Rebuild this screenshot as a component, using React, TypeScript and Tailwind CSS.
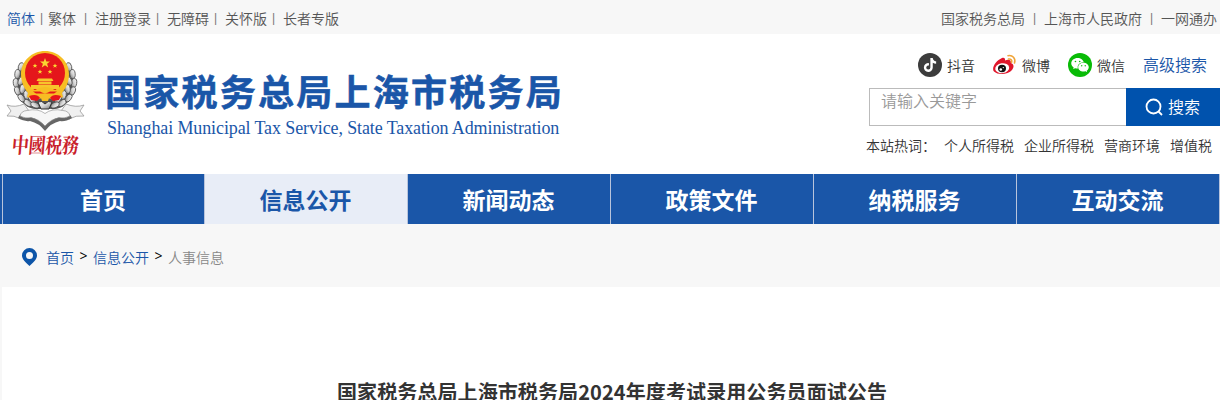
import React from "react";
import { FaTiktok } from "react-icons/fa";
import { AiFillWechat } from "react-icons/ai";

type barType = {
  label: string;
  // width of the gap holding the divider in front of the link
  gap?: string;
};

const leftLinks: barType[] = [
  { label: "简体" },
  { label: "繁体", gap: "w-[13px]" },
  { label: "注册登录", gap: "w-[19px]" },
  { label: "无障碍", gap: "w-[16px] pr-[3px]" },
  { label: "关怀版", gap: "w-[16px] pr-[3px]" },
  { label: "长者专版", gap: "w-[16px] pr-[3px]" },
];

const rightLinks: barType[] = [
  { label: "国家税务总局" },
  { label: "上海市人民政府", gap: "w-[19px]" },
  { label: "一网通办", gap: "w-[19px]" },
];

const menu = ["首页", "信息公开", "新闻动态", "政策文件", "纳税服务", "互动交流"];
const hotWords = ["个人所得税", "企业所得税", "营商环境", "增值税"];

// one side of the wheat ears: x, y, angle
const grains = [
  [17, 19, 15],
  [13.5, 26, 5],
  [12, 35, -8],
  [17, 33, 20],
  [13.5, 43, -20],
  [18.5, 41, 5],
  [17.5, 50, -38],
  [22.5, 47, -12],
  [24, 55, -55],
  [28, 51, -35],
  [31, 57, -70],
];

function LinkBar({ links, active }: { links: barType[]; active?: string }) {
  return (
    <div className="flex items-center text-sm leading-[20px]">
      {links.map((item) => (
        <React.Fragment key={item.label}>
          {item.gap && (
            <span
              className={`${item.gap} text-center font-['Liberation_Sans'] text-[12px] leading-[20px] text-[#777]`}
            >
              |
            </span>
          )}
          <a className={item.label === active ? "text-[#1a56a8]" : ""}>
            {item.label}
          </a>
        </React.Fragment>
      ))}
    </div>
  );
}

function Ear() {
  return (
    <g fill="url(#silver)" stroke="#4a4a4a" strokeWidth="0.8">
      {grains.map(([x, y, angle]) => (
        <ellipse
          key={`${x}-${y}`}
          cx={x}
          cy={y}
          rx="2.7"
          ry="4.5"
          transform={`rotate(${angle} ${x} ${y})`}
        />
      ))}
    </g>
  );
}

function Emblem() {
  return (
    <svg width="84" height="84" viewBox="0 0 84 84">
      <defs>
        <linearGradient id="silver" x1="0" y1="0" x2="1" y2="1">
          <stop offset="0" stopColor="#ffffff" />
          <stop offset="0.5" stopColor="#d4d4d4" />
          <stop offset="1" stopColor="#6f6f6f" />
        </linearGradient>
      </defs>
      {/* wheat ears */}
      <path
        d="M18 20C9 34 10 50 24 59C33 63 37 60 41 61C45 60 49 63 58 59C72 50 73 34 64 20L60 40C54 50 28 50 22 40Z"
        fill="#555"
      />
      <Ear />
      <g transform="translate(82 0) scale(-1 1)">
        <Ear />
      </g>
      {/* national emblem */}
      <path
        d="M41 3C54 3 65 13 65 26C65 34 62 40 58 45L59 49L50 52L41 49L32 52L23 49L24 45C20 40 17 34 17 26C17 13 28 3 41 3Z"
        fill="#f7bd23"
      />
      <ellipse cx="41" cy="25" rx="20" ry="20" fill="#e5161b" />
      <path
        d="M34 30.500H48L49.500 33H32.500ZM34.500 33.500H47.500V36.500H34.500ZM27 37H55V41H27Z"
        fill="#f7c52c"
      />
      <path d="M22 39L31 42Q41 36 51 42L60 39L55 47H27Z" fill="#f7bd23" />
      <path d="M29 43.500H36Q41 47 46 43.500H53L50 45.500H32Z" fill="#e5161b" />
      <path d="M25 48Q33 45 36 50L33 53L27 52ZM57 48Q49 45 46 50L49 53L55 52Z" fill="#e5161b" />
      <path d="M36 47Q41 44 46 47L44 53H38Z" fill="#f7bd23" />
      <path
        d="M41 10L42.300 13.500H46L43.100 15.800L44.200 19.500L41 17.300L37.800 19.500L38.900 15.800L36 13.500H39.700Z"
        fill="#f9d531"
      />
      <g fill="#f9d531">
        <path d="M31 15.500l.7 1.500h1.700l-1.400 1.100.6 1.700-1.600-1-1.600 1 .6-1.700-1.400-1.100h1.700z" />
        <path d="M51 15.500l.7 1.500h1.700l-1.400 1.100.6 1.700-1.600-1-1.600 1 .6-1.700-1.400-1.100h1.700z" />
        <path d="M36 21.500l.7 1.500h1.700l-1.400 1.100.6 1.700-1.600-1-1.600 1 .6-1.700-1.400-1.100h1.700z" />
        <path d="M46 21.500l.7 1.500h1.700l-1.400 1.100.6 1.700-1.600-1-1.600 1 .6-1.700-1.400-1.100h1.700z" />
      </g>
      <path
        d="M34 54Q38 52 41 56Q44 52 48 54L45 61H37Z"
        fill="url(#silver)"
        stroke="#333"
      />
      {/* ribbon */}
      <path
        d="M3 57Q11 60 20 56L25 63L17 71Q10 67 3 68L7 63Z"
        fill="#f0f0f0"
        stroke="#999"
        strokeWidth="0.8"
      />
      <path
        d="M80 57Q72 60 62 56L57 63L65 71Q72 67 80 68L76 63Z"
        fill="#f0f0f0"
        stroke="#999"
        strokeWidth="0.8"
      />
      <path
        d="M14 70Q16 65 23 64Q34 62 41 67Q48 62 59 64Q66 65 68 70Q61 74 56 73Q47 75 41 83Q35 75 26 73Q20 74 14 70Z"
        fill="#666"
      />
      <path
        d="M16 68Q17 63 23 62.500Q34 60 41 65.500Q48 60 59 62.500Q65 63 66 68Q61 71 55 69.500Q47 71 41 78Q35 71 27 69.500Q21 71 16 68Z"
        fill="#f6f6f6"
        stroke="#888"
        strokeWidth="0.6"
      />
    </svg>
  );
}

function WeiboIcon() {
  return (
    <svg width="26" height="22" viewBox="0 0 26 22">
      <path
        d="M10 4C12 3 13.500 4.200 13 6.500C16 5.300 19.500 5.500 18.800 9C22 10 22.300 13 20 16C16.500 20.500 6 21.500 2 17.500C-1 14 4 6.500 10 4Z"
        fill="#e0162b"
      />
      <ellipse cx="10.200" cy="14.200" rx="7" ry="4.900" fill="#fff" transform="rotate(-8 10.200 14.200)" />
      <ellipse cx="10" cy="14.500" rx="4" ry="3.700" fill="#111" />
      <circle cx="8.800" cy="15.500" r="1.300" fill="#fff" />
      <circle cx="11.300" cy="13.600" r="0.700" fill="#fff" />
      <path
        d="M16 1.700C20.500 .8 24 4.500 22.500 9M16.500 5C19 4.600 20.300 6.300 19.600 8.300"
        fill="none"
        stroke="#f0a53a"
        strokeWidth="1.600"
        strokeLinecap="round"
      />
    </svg>
  );
}

export default function App() {
  return (
    <div className="h-[400px] w-[1220px] overflow-hidden bg-[#f7f7f7] font-['Noto_Sans_CJK_SC',sans-serif] text-[#333]">
      {/* TOP BAR */}
      <div className="flex h-[34px] items-start justify-between pt-[8px] pr-[3px] pl-[7px] font-[350] text-[#555]">
        <LinkBar links={leftLinks} active="简体" />
        <LinkBar links={rightLinks} />
      </div>

      {/* HEADER */}
      <div className="flex h-[140px] bg-white">
        <div className="w-[104px] pt-[14px] pl-[4px]">
          <Emblem />
          <p className="-mt-[2px] ml-[8px] origin-center -skew-x-6 scale-y-125 font-['Noto_Serif_CJK_SC','Noto_Sans_CJK_SC',serif] text-[17px] leading-[28px] font-bold tracking-[-0.3px] whitespace-nowrap text-[#c9202a]">
            中國税務
          </p>
        </div>
        <div className="pt-[32px] pl-[1px] text-[#1a56a8]">
          <h1 className="text-[36px] leading-[48px] font-bold tracking-[2.25px] whitespace-nowrap [-webkit-text-stroke:0.6px_#1a56a8]">
            国家税务总局上海市税务局
          </h1>
          <p className="mt-[2px] ml-[2px] font-['Liberation_Serif',serif] text-[18px] leading-[24px] tracking-[-0.115px] whitespace-nowrap">
            Shanghai Municipal Tax Service, State Taxation Administration
          </p>
        </div>

        <div className="ml-auto w-[354px] pt-[19px] font-[350]">
          <div className="flex h-[24px] items-center pl-[52px] text-sm">
            <div className="flex h-[24px] w-[24px] items-center justify-center rounded-full bg-[#3c3c3c]">
              <FaTiktok className="text-white" size={14} />
            </div>
            <span className="ml-[5px]">抖音</span>
            <div className="ml-[17px]">
              <WeiboIcon />
            </div>
            <span className="ml-[4px]">微博</span>
            <div className="ml-[18px] flex h-[24px] w-[24px] items-center justify-center rounded-full bg-[#09bb07]">
              <AiFillWechat className="text-white" size={20} />
            </div>
            <span className="ml-[5px]">微信</span>
            <a className="-mt-[2px] ml-[18px] text-base text-[#1a56a8]">高级搜索</a>
          </div>

          <div className="mt-[11px] ml-[3px] flex h-[38px]">
            <div className="w-[257px] border border-r-0 border-[#bbb] pl-[11px] text-base leading-[22px] text-[#999]">
              请输入关键字
            </div>
            <button className="flex flex-1 items-center bg-[#0052ad] pl-[19px] text-base text-white">
              <svg width="18" height="18" viewBox="0 0 18 18" fill="none" stroke="currentColor" strokeWidth="1.800">
                <circle cx="8.500" cy="8.500" r="7" />
                <path d="M13.500 13.500L17 17" />
              </svg>
              <span className="-mt-[2px] ml-[5px]">搜索</span>
            </button>
          </div>

          <div className="mt-[9px] flex gap-[10px] text-sm leading-[20px] whitespace-nowrap">
            <span className="-mr-[2px] w-[70px]">本站热词：</span>
            {hotWords.map((word) => (
              <a key={word}>{word}</a>
            ))}
          </div>
        </div>
      </div>

      {/* NAV BAR */}
      <div className="flex h-[50px] bg-[#1a56a8] pl-[2px]">
        {menu.map((item) => (
          <a
            key={item}
            className={
              item === "信息公开"
                ? "w-[203px] border-l border-[#b8c4dc] bg-[#e8edf7] pr-[1px] text-center text-[23px] leading-[50px] font-bold text-[#1a56a8]"
                : "w-[203px] border-l border-[#b8c4dc] pr-[1px] text-center text-[23px] leading-[50px] font-bold text-white first:w-[202px]"
            }
          >
            {item}
          </a>
        ))}
        <span className="w-[1px] bg-[#b8c4dc]" />
      </div>

      {/* BREADCRUMB */}
      <div className="flex h-[63px] items-start pt-[22px] pl-[22px] text-sm leading-[22px] font-[350] text-[#1a56a8]">
        <svg className="mt-[2px]" width="15" height="18" viewBox="0 0 15 18">
          <path
            d="M7.500 0A7.500 7.500 0 0 0 0 7.500C0 11.500 4 14.500 7.500 18C11 14.500 15 11.500 15 7.500A7.500 7.500 0 0 0 7.500 0ZM7.500 4A3.500 3.500 0 1 1 7.500 11A3.500 3.500 0 1 1 7.500 4Z"
            fill="#0d55a8"
          />
        </svg>
        <a className="ml-[9px]">首页</a>
        <span className="w-[19px] text-center font-['Open_Sans'] leading-[20px] font-normal text-black">
          &gt;
        </span>
        <a>信息公开</a>
        <span className="w-[19px] text-center font-['Open_Sans'] leading-[20px] font-normal text-black">
          &gt;
        </span>
        <span className="text-[#888]">人事信息</span>
      </div>

      {/* CONTENT */}
      <div className="ml-[2px] h-[113px] bg-white pt-[90px]">
        <h2 className="pl-[2px] text-center text-[20px] leading-[30px] font-bold tracking-[0.1px] whitespace-nowrap">
          国家税务总局上海市税务局2024年度考试录用公务员面试公告
        </h2>
      </div>
    </div>
  );
}
